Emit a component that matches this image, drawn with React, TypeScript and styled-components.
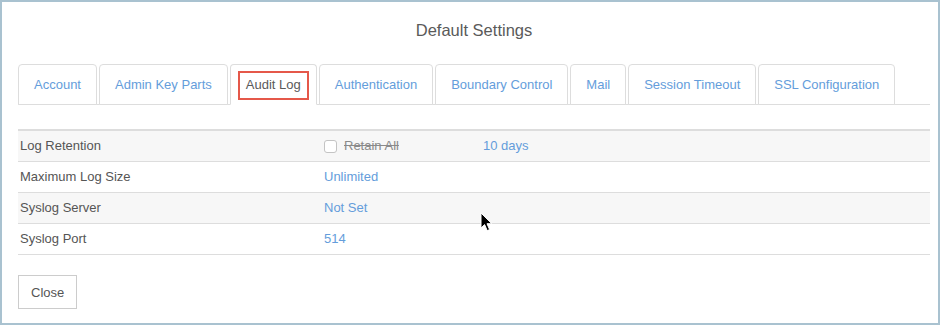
import React from 'react';
import styled, { createGlobalStyle } from 'styled-components';

const TABS = [
  'Account',
  'Admin Key Parts',
  'Audit Log',
  'Authentication',
  'Boundary Control',
  'Mail',
  'Session Timeout',
  'SSL Configuration',
];

const ACTIVE_TAB = 'Audit Log';

const App = (): JSX.Element => {
  return (
    <>
      <GlobalStyle />
      <Frame>
        <Title>Default Settings</Title>
        <Body>
          <TabList>
            {TABS.map((name) => (
              <Tab key={name} $active={name === ACTIVE_TAB}>
                {name === ACTIVE_TAB ? <FocusedLabel>{name}</FocusedLabel> : name}
              </Tab>
            ))}
          </TabList>

          <SettingsTable>
            <Row $striped>
              <Label>Log Retention</Label>
              <Value>
                <RetainToggle>
                  <Checkbox />
                  <Struck>Retain All</Struck>
                </RetainToggle>
                <Link>10 days</Link>
              </Value>
            </Row>
            <Row>
              <Label>Maximum Log Size</Label>
              <Value>
                <Link>Unlimited</Link>
              </Value>
            </Row>
            <Row $striped>
              <Label>Syslog Server</Label>
              <Value>
                <Link>Not Set</Link>
              </Value>
            </Row>
            <Row>
              <Label>Syslog Port</Label>
              <Value>
                <Link>514</Link>
              </Value>
            </Row>
          </SettingsTable>

          <Footer>
            <CloseButton>Close</CloseButton>
          </Footer>
        </Body>

        <Cursor width="13" height="20" viewBox="0 0 13 20">
          <path
            d="M1 1 L1 16 L4.6 12.6 L7.2 18.6 L9.6 17.6 L7 11.7 L11.8 11.7 Z"
            fill="#000"
            stroke="#fff"
            strokeWidth="1"
            strokeLinejoin="round"
          />
        </Cursor>
      </Frame>
    </>
  );
};

export default App;

const GlobalStyle = createGlobalStyle`
  html, body {
    margin: 0;
    padding: 0;
    background: #ffffff;
  }

  body {
    font-family: "Liberation Sans", Arial, sans-serif;
    -webkit-font-smoothing: antialiased;
  }
`;

const Frame = styled.div`
  position: relative;
  box-sizing: border-box;
  width: 940px;
  height: 325px;
  border: 2px solid #a9c2d0;
  background: #ffffff;
  display: flex;
  flex-direction: column;
`;

const Title = styled.h1`
  box-sizing: border-box;
  height: 62px;
  margin: 0;
  padding: 18px 0 0 8px;
  font-size: 16.5px;
  line-height: 20px;
  font-weight: 400;
  color: #5a5a5a;
  text-align: center;
`;

const Body = styled.div`
  padding: 0 8px 0 16px;
`;

const TabList = styled.ul`
  display: flex;
  margin: 0;
  padding: 0;
  list-style: none;
  border-bottom: 1px solid #dddddd;
`;

const Tab = styled.li<{ $active?: boolean }>`
  box-sizing: border-box;
  height: 41px;
  margin: 0 2px -1px 0;
  padding: 0 15px;
  display: flex;
  align-items: center;
  font-size: 13px;
  line-height: 20px;
  color: ${({ $active }) => ($active ? '#5a5a5a' : '#649ddb')};
  background: #ffffff;
  border: 1px solid #dddddd;
  border-bottom-color: ${({ $active }) => ($active ? 'transparent' : '#dddddd')};
  border-radius: 4px 4px 0 0;
  white-space: nowrap;
`;

const FocusedLabel = styled.span`
  position: relative;

  &::after {
    content: '';
    position: absolute;
    top: -4px;
    bottom: -5px;
    left: -8px;
    right: -8px;
    border: 2px solid #e5584a;
  }
`;

const SettingsTable = styled.div`
  margin-top: 24px;
  border-top: 2px solid #dddddd;
`;

const Row = styled.div<{ $striped?: boolean }>`
  display: grid;
  grid-template-columns: 304px 1fr;
  height: 31px;
  box-sizing: border-box;
  align-items: center;
  border-bottom: 1px solid #dddddd;
  background: ${({ $striped }) => ($striped ? '#f7f7f7' : '#ffffff')};
  font-size: 13px;
  line-height: 20px;
`;

const Label = styled.div`
  padding: 0 2px;
  color: #555555;
`;

const Value = styled.div`
  display: flex;
  align-items: center;
  padding: 0 2px;
`;

const RetainToggle = styled.label`
  display: flex;
  align-items: center;
  gap: 7px;
  width: 159px;
`;

const Checkbox = styled.span`
  box-sizing: border-box;
  width: 13px;
  height: 13px;
  border: 1px solid #c4c4c4;
  border-radius: 3px;
  background: #ffffff;
`;

const Struck = styled.span`
  color: #8a8a8a;
  text-decoration: line-through;
`;

const Link = styled.span`
  color: #649ddb;
`;

const Footer = styled.div`
  padding-top: 20px;
`;

const CloseButton = styled.button`
  box-sizing: border-box;
  height: 34px;
  padding: 0 12px;
  font-family: inherit;
  font-size: 13px;
  color: #555555;
  background: #ffffff;
  border: 1px solid #cccccc;
  border-radius: 0;
`;

const Cursor = styled.svg`
  position: absolute;
  left: 478px;
  top: 210px;
`;
